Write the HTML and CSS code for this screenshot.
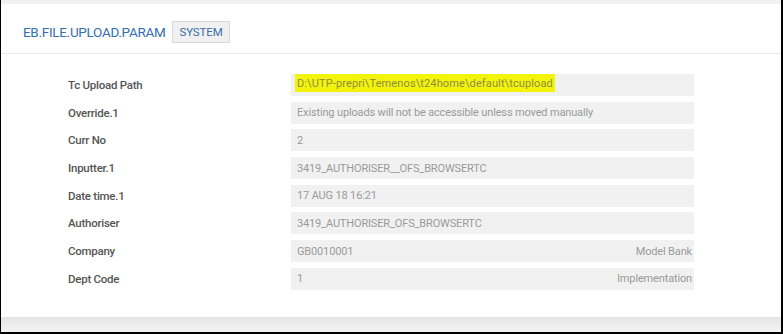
FILE: index.html
```html
<!DOCTYPE html>
<html lang="en">

<head>
    <meta charset="UTF-8">
    <meta name="viewport" content="width=device-width, initial-scale=1.0">
    <title>EB.FILE.UPLOAD.PARAM</title>
    <link rel="stylesheet" href="styles.css">
</head>

<body>
    <div class="frame">
        <div class="top-strip"></div>

        <!-- Record header -->
        <div class="header">
            <h1 class="title">EB.FILE.UPLOAD.PARAM</h1>
            <span class="badge">SYSTEM</span>
        </div>

        <!-- Record fields -->
        <div class="fields">
            <div class="row">
                <span class="label">Tc Upload Path</span>
                <div class="value"><mark class="hl">D:\UTP-prepri\Temenos\t24home\default\tcupload</mark></div>
            </div>
            <div class="row">
                <span class="label">Override.1</span>
                <div class="value">Existing uploads will not be accessible unless moved manually</div>
            </div>
            <div class="row">
                <span class="label">Curr No</span>
                <div class="value">2</div>
            </div>
            <div class="row">
                <span class="label">Inputter.1</span>
                <div class="value">3419_AUTHORISER__OFS_BROWSERTC</div>
            </div>
            <div class="row">
                <span class="label">Date time.1</span>
                <div class="value">17 AUG 18 16:21</div>
            </div>
            <div class="row">
                <span class="label">Authoriser</span>
                <div class="value">3419_AUTHORISER_OFS_BROWSERTC</div>
            </div>
            <div class="row">
                <span class="label">Company</span>
                <div class="value">GB0010001 <span class="enrich">Model Bank</span></div>
            </div>
            <div class="row">
                <span class="label">Dept Code</span>
                <div class="value">1 <span class="enrich">Implementation</span></div>
            </div>
        </div>

        <div class="footer-strip"></div>
    </div>
</body>

</html>
```

FILE: styles.css
```css
body {
    font-family: Roboto, 'Liberation Sans', sans-serif;
    margin: 0;
    padding: 0;
    background-color: #ffffff;
}

.frame {
    height: 334px;
    box-sizing: border-box;
    border-left: 1px solid #000;
    border-right: 2px solid #000;
    border-bottom: 2px solid #000;
    display: flex;
    flex-direction: column;
}

.top-strip {
    height: 4px;
    background-color: #f1f1f1;
}

.header {
    display: flex;
    align-items: center;
    gap: 7px;
    padding: 17px 0 10px 22px;
    border-bottom: 1px solid #e9e9e9;
}

.title {
    margin: 0;
    font-size: 13.5px;
    font-weight: 400;
    color: #3470b0;
    letter-spacing: -0.3px;
}

.badge {
    display: flex;
    align-items: center;
    height: 20px;
    padding: 0 6px;
    font-size: 11.5px;
    color: #3d6da6;
    background-color: #f0f0f0;
    border: 1px solid #d9d9d9;
    letter-spacing: -0.1px;
}

.fields {
    flex: 1;
    display: flex;
    flex-direction: column;
    gap: 5.7px;
    padding: 20px 0 0 67px;
}

.row {
    display: flex;
    align-items: center;
}

.label {
    width: 223px;
    font-size: 11.5px;
    font-weight: 500;
    color: #555555;
    letter-spacing: -0.25px;
}

.value {
    width: 403px;
    height: 22px;
    box-sizing: border-box;
    padding: 0 2px 0 6px;
    display: flex;
    align-items: center;
    justify-content: space-between;
    background-color: #f1f1f1;
    font-size: 11px;
    color: #9a9a9a;
    letter-spacing: -0.15px;
}

.hl {
    align-self: flex-start;
    height: 17px;
    display: flex;
    align-items: center;
    margin-left: -2px;
    padding: 1px 2px 0;
    background-color: #f3f30c;
    color: #8e8e40;
    letter-spacing: 0.12px;
}

.enrich {
    color: #9a9a9a;
}

.footer-strip {
    height: 15px;
    background: linear-gradient(#e4e4e4, #f4f4f4);
}
```
